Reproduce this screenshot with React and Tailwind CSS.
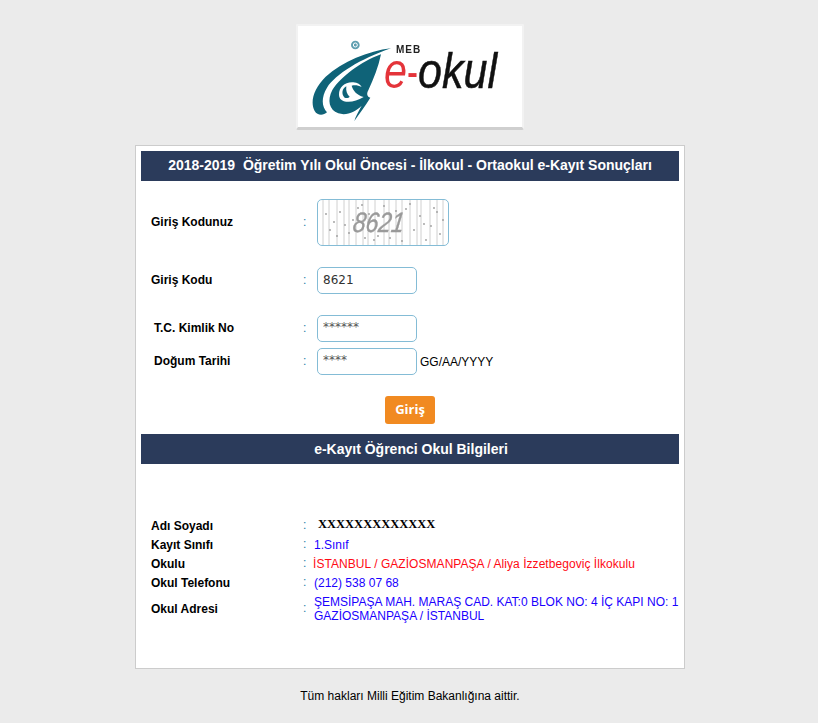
import React from "react";

const sans = "font-['Liberation_Sans',Arial,sans-serif]";

function Logo() {
  return (
    <div className="w-[228px] h-[106px] mx-auto bg-white border-2 border-[#f2f2f2] border-b-[3px] border-b-[#cfcfcf] rounded-[2px] overflow-hidden">
      <svg width="224" height="101" viewBox="298 26 224 101" className="block blur-[0.45px]">
        <g transform="translate(305 35) scale(0.3333)">
          <circle cx="151" cy="30" r="13" fill="#5f9fb0" />
          <circle cx="151" cy="30" r="6" fill="none" stroke="#fff" strokeWidth="3" />
          <path fill="#0f6378" d="M258 40C190 48 112 80 62 125C27 160 14 200 29 228C37 242 55 242 66 232C50 215 48 188 66 158C92 118 165 72 258 40Z" />
          <path fill="#0f6378" d="M228 58C168 80 108 125 82 165C66 195 72 225 100 235C125 243 152 230 170 212C160 230 152 244 148 258C165 232 182 212 196 188C186 186 184 176 190 166C206 132 220 96 228 58Z" />
          <path fill="#fff" d="M102 178C102 157 120 140 145 142C158 143 166 149 170 156C160 151 150 150 140 152C144 166 154 180 176 186C150 202 120 206 106 192C103 188 102 183 102 178Z" />
          <path fill="#0f6378" d="M124 154C111 160 108 178 119 188C126 191 132 188 134 185C126 178 122 168 124 154Z" />
        </g>
        <text x="396" y="52.5" fontFamily="'Liberation Sans',Arial,sans-serif" fontWeight="700" fontSize="10" letterSpacing="1" fill="#222">MEB</text>
        <text x="384" y="88" fontFamily="'Liberation Sans',Arial,sans-serif" fontStyle="italic" fontSize="50" fill="#e4343a" textLength="23" lengthAdjust="spacingAndGlyphs">e</text>
        <text x="407" y="88" fontFamily="'Liberation Sans',Arial,sans-serif" fontSize="50" fill="#e4343a" textLength="11" lengthAdjust="spacingAndGlyphs">-</text>
        <text x="418" y="88" fontFamily="'Liberation Sans',Arial,sans-serif" fontStyle="italic" fontSize="50" fill="#111" stroke="#111" strokeWidth="0.5" textLength="79" lengthAdjust="spacingAndGlyphs">okul</text>
      </svg>
    </div>
  );
}

function Captcha() {
  const lines = [5, 11, 19, 26, 31, 38, 45, 50, 57, 66, 71, 78, 84, 92, 99, 103, 112, 119, 125];
  const dots = [
    [8, 14], [12, 30], [16, 22], [19, 36], [22, 12], [27, 25], [31, 33], [35, 20], [40, 8], [44, 5], [47, 38], [51, 14],
    [56, 40], [60, 36], [66, 6], [72, 38], [78, 11], [84, 41], [88, 9], [92, 4], [96, 30], [102, 16], [106, 24], [108, 40],
    [113, 26], [116, 8], [119, 12], [122, 34], [125, 20],
  ];
  return (
    <div className="w-[132px] h-[47px] border border-[#84bcd6] rounded-[5px] overflow-hidden bg-white">
      <svg width="130" height="45" viewBox="0 0 130 45" className="block blur-[0.35px]">
        {lines.map((x) => (
          <line key={x} x1={x} y1="0" x2={x} y2="45" stroke="#d0d0d0" strokeWidth="1" />
        ))}
        {dots.map(([x, y]) => (
          <circle key={`${x}-${y}`} cx={x} cy={y} r="0.9" fill="#9c9c9c" />
        ))}
        <text transform="translate(34 32) skewX(-8)" fontFamily="'Liberation Sans',Arial,sans-serif" fontStyle="italic" fontSize="28" fill="#9a9a9a" stroke="#9a9a9a" strokeWidth="0.4" textLength="51" lengthAdjust="spacingAndGlyphs">8621</text>
      </svg>
    </div>
  );
}

function Colon() {
  return <span className="text-[12px] text-[#2b7ea6] -translate-y-[1px]">:</span>;
}

function FormRow({ label, indent, className, children }) {
  return (
    <div className={`grid grid-cols-[152px_14px_1fr] items-center pl-[10px] ${className}`}>
      <span className={`text-[12px] font-bold text-black pb-[2px] ${indent ? "pl-[3px]" : ""}`}>{label}</span>
      <Colon />
      <div className="flex items-center">{children}</div>
    </div>
  );
}

function Field({ value, stars }) {
  return (
    <input
      readOnly
      value={value}
      className={`w-[100px] h-[27px] border border-[#84bcd6] rounded-[5px] px-[5px] text-[12px] bg-white font-['DejaVu_Sans',Verdana,sans-serif] outline-none ${stars ? "pb-[4px] text-[#555]" : "pb-[2px] text-[#333]"}`}
    />
  );
}

function InfoRow({ label, className, children }) {
  return (
    <div className={`grid grid-cols-[152px_10px_1fr] items-center pl-[10px] ${className}`}>
      <span className="text-[12px] font-bold text-black">{label}</span>
      <Colon />
      <div className="text-[12px] leading-[14px] whitespace-nowrap">{children}</div>
    </div>
  );
}

function Heading({ children, className }) {
  return (
    <div className={`h-[30px] bg-[#2b3b5b] flex items-center justify-center text-white text-[14px] font-bold whitespace-pre ${className}`}>
      {children}
    </div>
  );
}

export default function App() {
  return (
    <div className={`min-h-[723px] bg-[#ebebeb] pt-[24px] pl-[2px] ${sans}`}>
      <Logo />
      <div className="w-[550px] h-[524px] mx-auto mt-[15px] bg-white border border-[#cccccc] p-[5px]">
        <Heading className="pb-[2px]">2018-2019  Öğretim Yılı Okul Öncesi - İlkokul - Ortaokul e-Kayıt Sonuçları</Heading>

        <FormRow label="Giriş Kodunuz" className="mt-[18px]"><Captcha /></FormRow>
        <FormRow label="Giriş Kodu" className="mt-[21px]"><Field value="8621" /></FormRow>
        <FormRow label="T.C. Kimlik No" indent className="mt-[21px]"><Field value="******" stars /></FormRow>
        <FormRow label="Doğum Tarihi" indent className="mt-[6px]">
          <Field value="****" stars />
          <span className="ml-[3px] text-[12px] text-black">GG/AA/YYYY</span>
        </FormRow>

        <div className="flex justify-center mt-[21px]">
          <button className="w-[50px] h-[28px] bg-[#f18a21] rounded-[3px] text-white text-[13px] font-bold font-['Open_Sans',sans-serif]">Giriş</button>
        </div>

        <Heading className="mt-[10px] pl-[2px]">e-Kayıt Öğrenci Okul Bilgileri</Heading>

        <div className="mt-[52px]">
          <InfoRow label="Adı Soyadı" className="h-[19px]">
            <span className="block pl-[5px] -mt-[4px] font-['Liberation_Serif',serif] font-bold text-[12.5px] text-black">XXXXXXXXXXXXX</span>
          </InfoRow>
          <InfoRow label="Kayıt Sınıfı" className="h-[19px]"><span className="text-[#1a00ff] pl-[1px]">1.Sınıf</span></InfoRow>
          <InfoRow label="Okulu" className="h-[19px]"><span className="text-[#ff0a14] tracking-[0.05px]">İSTANBUL / GAZİOSMANPAŞA / Aliya İzzetbegoviç İlkokulu</span></InfoRow>
          <InfoRow label="Okul Telefonu" className="h-[19px]"><span className="text-[#1a00ff] pl-[1px]">(212) 538 07 68</span></InfoRow>
          <InfoRow label="Okul Adresi" className="mt-[3px]">
            <span className="block text-[#1a00ff] pl-[1px]">ŞEMSİPAŞA MAH. MARAŞ CAD. KAT:0 BLOK NO: 4 İÇ KAPI NO: 1<br />GAZİOSMANPAŞA / İSTANBUL</span>
          </InfoRow>
        </div>
      </div>
      <p className="mt-[18px] text-center text-[12px] text-black">Tüm hakları Milli Eğitim Bakanlığına aittir.</p>
    </div>
  );
}
